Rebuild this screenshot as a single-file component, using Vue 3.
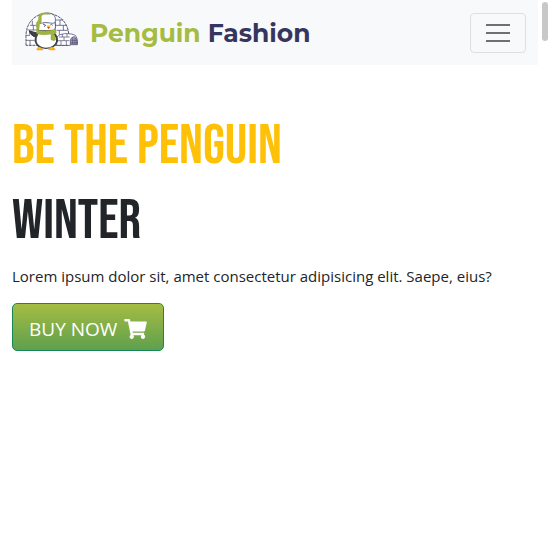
<script setup>
const cart = 'M528.12 301.319l47.273-208C578.806 78.301 567.391 64 551.99 64H159.208l-9.166-44.81C147.758 8.021 137.93 0 126.529 0H24C10.745 0 0 10.745 0 24v16c0 13.255 10.745 24 24 24h69.883l70.248 343.435C147.325 417.1 136 435.222 136 456c0 30.928 25.072 56 56 56s56-25.072 56-56c0-15.674-6.447-29.835-16.824-40h209.647C430.447 426.165 424 440.326 424 456c0 30.928 25.072 56 56 56s56-25.072 56-56c0-22.172-12.888-41.332-31.579-50.405l5.517-24.276c3.413-15.018-8.002-29.319-23.403-29.319H218.117l-6.545-32h293.145c11.206 0 20.92-7.754 23.403-18.681z'
</script>

<template>
  <div class="page">
    <nav class="navbar">
      <a class="brand" href="#" aria-label="Penguin Fashion">
        <svg class="logo" viewBox="72 36 162 123" aria-hidden="true">
          <path d="M78 136V104C80 66 105 42 141 40C177 42 202 65 206 100V136Z" fill="#fff" stroke="#343660" stroke-width="2.5" stroke-dasharray="9 2" />
          <path d="M82 90H110M78 106H90M78 121H104M90 76H108M97 62V76M100 76V90M89 90V104M90 121V136M166 60H190M168 76H200M170 91H204M180 60V76M190 76V91M178 91V104" fill="none" stroke="#343660" stroke-width="2" />
          <path d="M170 136V112Q178 101 194 101Q217 100 227 107Q234 116 233 134H211V136Z" fill="#fff" stroke="#343660" stroke-width="2" />
          <path d="M173 122H208M177 111H209M187 102V111M201 102V111M192 111V122M183 122V135M199 122V135" fill="none" stroke="#343660" stroke-width="1.8" />
          <path d="M211 132V120Q214 110 223 110Q231 114 231 132Z" fill="#a9aabd" stroke="#343660" stroke-width="2" />
          <path d="M213 121H230M213 127H230M218 114V131M225 114V131" stroke="#343660" stroke-width="1.5" />
          <path d="M111 99L88 93Q92 108 108 112Z" fill="#414248" stroke="#333439" stroke-width="3" />
          <path d="M112 98Q103 108 104 124Q108 146 138 147Q168 146 174 124Q175 108 164 98Z" fill="#414248" />
          <path d="M115 102Q108 113 110 126Q116 142 138 143Q162 141 168 125Q169 112 161 102Z" fill="#fff" />
          <path d="M112 67Q108 81 116 92H164Q169 80 165 65Z" fill="#fff" stroke="#4b4c58" stroke-width="3" />
          <path d="M120 67V49Q125 39 144 39Q163 40 166 54V67Q159 72 151 69Q139 66 120 70Z" fill="#fff" stroke="#343660" stroke-width="2" />
          <path d="M117 43Q130 36 151 40V43H128L124 49V65L119 71L117 88L110 90V68L115 60Z" fill="#9fb63c" stroke="#7d8f2f" stroke-width="1" />
          <path d="M129 72L137 76L132 80M151 75Q155 71 158 76" fill="none" stroke="#343660" stroke-width="2.5" />
          <path d="M139 77L149 76L151 80L144 83Z" fill="#ffc221" />
          <path d="M141 81H150L146 88Z" fill="#e43b2c" />
          <path d="M110 90Q136 97 167 88L169 98L162 102L167 118L162 122L153 119V102Q130 107 110 101Z" fill="#9fb63c" stroke="#7d8f2f" stroke-width="1.2" />
          <path d="M110 148Q112 142 119 141L128 147V150H112ZM146 149L149 143Q157 138 166 148L160 150Z" fill="#ffb41b" stroke="#d58a13" stroke-width="1.3" />
        </svg>
        <span class="brand-name"><span class="brand-accent">Penguin</span> Fashion</span>
      </a>
      <button class="toggler" type="button" aria-label="Toggle navigation">
        <svg class="bars" viewBox="0 0 24 20" aria-hidden="true">
          <path d="M0 2H24M0 10H24M0 18H24" stroke="#6f7072" stroke-width="2" />
        </svg>
      </button>
    </nav>
    <main class="hero">
      <h1 class="title warning">BE THE PENGUIN</h1>
      <h2 class="title">WINTER</h2>
      <p class="lead">Lorem ipsum dolor sit, amet consectetur adipisicing elit. Saepe, eius?</p>
      <button class="buy" type="button">
        BUY NOW
        <svg class="cart" viewBox="0 0 576 512" aria-hidden="true"><path :d="cart" fill="currentColor" /></svg>
      </button>
    </main>
    <div class="scroll-thumb" aria-hidden="true"></div>
  </div>
</template>

<style>
body {
  background: #fff;
}
</style>

<style scoped>
.page {
  padding: 0 12px;
  color: #212529;
  font-family: "Open Sans", "Noto Sans", sans-serif;
  font-size: 15px;
  line-height: 24px;
}

.navbar {
  display: flex;
  align-items: center;
  justify-content: space-between;
  box-sizing: border-box;
  height: 65px;
  padding: 0 12px;
  background: #f8f9fa;
}

.brand {
  display: flex;
  align-items: center;
  gap: 12px;
  text-decoration: none;
}

.logo {
  width: 54px;
  height: 41px;
}

.brand-name {
  padding-top: 2px;
  color: #343660;
  font-family: Montserrat, Inter, sans-serif;
  font-size: 25px;
  font-weight: 700;
  line-height: 37px;
  white-space: nowrap;
}

.brand-accent {
  color: #a5bc42;
}

.toggler {
  display: flex;
  align-items: center;
  justify-content: center;
  box-sizing: border-box;
  width: 56px;
  height: 40px;
  padding: 0;
  border: 1px solid #dedfe0;
  border-radius: 4px;
  background: transparent;
}

.bars {
  width: 24px;
  height: 20px;
}

.hero {
  padding-top: 48px;
}

.title {
  margin: 0 0 8px;
  font-family: "Bebas Neue", Roboto, sans-serif;
  font-size: 56px;
  font-weight: 500;
  line-height: 67px;
}

.warning {
  color: #ffc107;
}

.lead {
  margin: 0 0 14px;
  line-height: 26px;
}

.buy {
  display: flex;
  align-items: center;
  gap: 7px;
  box-sizing: border-box;
  height: 48px;
  padding: 4px 16px 0;
  border: 1px solid #198754;
  border-radius: 5px;
  background: linear-gradient(#a5bc42, #5ea04e);
  color: #fff;
  font: 19px/30px "Open Sans", "Noto Sans", sans-serif;
  white-space: nowrap;
}

.cart {
  width: 23px;
  height: 20px;
}

.scroll-thumb {
  position: fixed;
  top: 2px;
  right: 2px;
  width: 6px;
  height: 39px;
  border-radius: 3px;
  background: #c8c8c8;
}
</style>
